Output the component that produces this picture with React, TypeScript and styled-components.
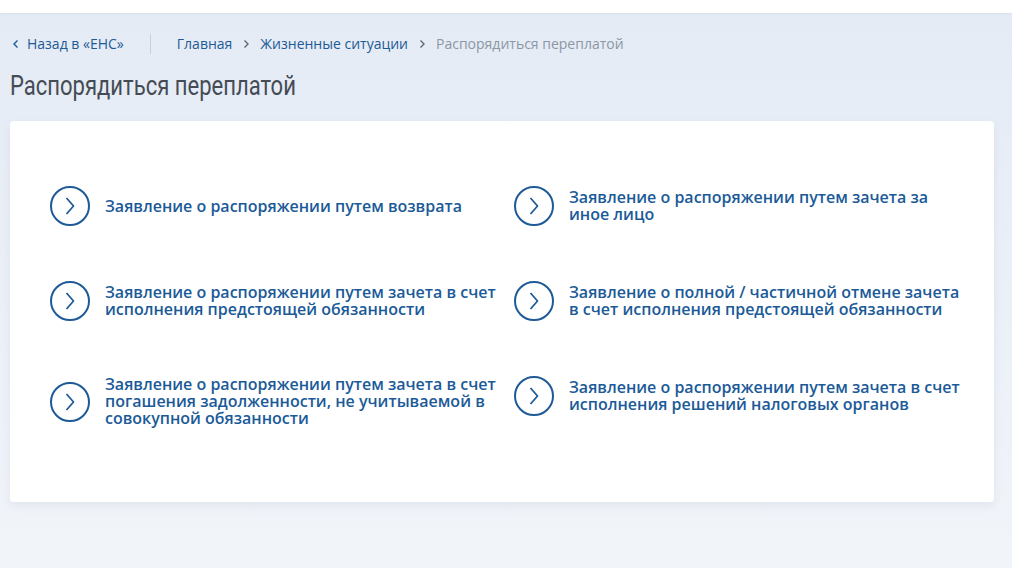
import React from 'react'
import styled, { createGlobalStyle } from 'styled-components'

const GlobalStyle = createGlobalStyle`
  html, body {
    margin: 0;
    padding: 0;
  }
  body {
    font-family: 'Open Sans', 'Noto Sans', sans-serif;
    background: #ffffff;
  }
`

const TopBar = styled.div`
  height: 13px;
  background: #ffffff;
  box-shadow: 0 1px 2px rgba(40, 60, 90, 0.06);
  position: relative;
  z-index: 1;
`

const Page = styled.main`
  min-height: 555px;
  background: linear-gradient(180deg, #e4ebf5 0%, #eaeff7 40%, #f1f4f9 100%);
  padding: 22px 18px 0 10px;
  box-sizing: border-box;
`

const Crumbs = styled.nav`
  display: flex;
  align-items: center;
  height: 18px;
  font-size: 14px;
  line-height: 18px;
  padding-left: 2px;
`

const BackLink = styled.a`
  display: flex;
  align-items: center;
  gap: 7px;
  color: #1d5a96;
  text-decoration: none;
  padding-right: 26px;
  margin-right: 26px;
  border-right: 1px solid #c7d0dc;
  height: 20px;
`

const CrumbLink = styled.a<{ $current?: boolean }>`
  color: ${p => (p.$current ? '#8c97a4' : '#1d5a96')};
  text-decoration: none;
`

const Sep = styled.span`
  display: inline-flex;
  margin: 0 10px;
  color: #5c6a7a;
`

const Title = styled.h1`
  margin: 15px 0 0;
  font-family: 'Roboto', 'Liberation Sans', sans-serif;
  font-weight: 400;
  font-size: 28px;
  line-height: 36px;
  height: 36px;
  color: #444b54;
  white-space: nowrap;

  span {
    display: inline-block;
    transform: scaleX(0.787);
    transform-origin: left center;
  }
`

const Card = styled.section`
  margin-top: 17px;
  background: #ffffff;
  border-radius: 4px;
  box-shadow: 0 4px 10px rgba(60, 80, 120, 0.08);
  height: 381px;
  box-sizing: border-box;
  padding: 65px 20px 0 40px;
`

const Grid = styled.div`
  display: grid;
  grid-template-columns: 464px 449px;
  row-gap: 55px;
  align-items: start;
`

const Item = styled.a`
  display: flex;
  align-items: center;
  gap: 15px;
  text-decoration: none;
  cursor: pointer;
  min-height: 40px;
`

const Circle = styled.span`
  flex: 0 0 40px;
  width: 40px;
  height: 40px;
  box-sizing: border-box;
  border: 2px solid #1d5a96;
  border-radius: 50%;
  display: flex;
  align-items: center;
  justify-content: center;
  color: #1d5a96;
`

const ItemText = styled.span`
  font-size: 16px;
  line-height: 17px;
  font-weight: 600;
  color: #1b5a98;
`

const ChevronSmall = ({ dir }: { dir: 'left' | 'right' }) => (
  <svg width="8" height="10" viewBox="0 0 8 10" fill="none">
    <path
      d={dir === 'left' ? 'M5.5 1.5 L2 5 L5.5 8.5' : 'M2.5 1.5 L6 5 L2.5 8.5'}
      stroke="currentColor"
      strokeWidth="1.4"
    />
  </svg>
)

const Arrow = () => (
  <svg width="12" height="20" viewBox="0 0 12 20" fill="none">
    <path d="M2.5 2 L9.5 10 L2.5 18" stroke="currentColor" strokeWidth="1.8" strokeLinejoin="round" />
  </svg>
)

const items = [
  'Заявление о распоряжении путем возврата',
  'Заявление о распоряжении путем зачета за иное лицо',
  'Заявление о распоряжении путем зачета в счет исполнения предстоящей обязанности',
  'Заявление о полной / частичной отмене зачета в счет исполнения предстоящей обязанности',
  'Заявление о распоряжении путем зачета в счет погашения задолженности, не учитываемой в совокупной обязанности',
  'Заявление о распоряжении путем зачета в счет исполнения решений налоговых органов',
]

export default function App() {
  return (
    <>
      <GlobalStyle />
      <TopBar />
      <Page>
        <Crumbs>
          <BackLink href="#">
            <ChevronSmall dir="left" />
            Назад в «ЕНС»
          </BackLink>
          <CrumbLink href="#">Главная</CrumbLink>
          <Sep>
            <ChevronSmall dir="right" />
          </Sep>
          <CrumbLink href="#">Жизненные ситуации</CrumbLink>
          <Sep>
            <ChevronSmall dir="right" />
          </Sep>
          <CrumbLink $current>Распорядиться переплатой</CrumbLink>
        </Crumbs>
        <Title>
          <span>Распорядиться переплатой</span>
        </Title>
        <Card>
          <Grid>
            {items.map(text => (
              <Item key={text} href="#">
                <Circle>
                  <Arrow />
                </Circle>
                <ItemText>{text}</ItemText>
              </Item>
            ))}
          </Grid>
        </Card>
      </Page>
    </>
  )
}
